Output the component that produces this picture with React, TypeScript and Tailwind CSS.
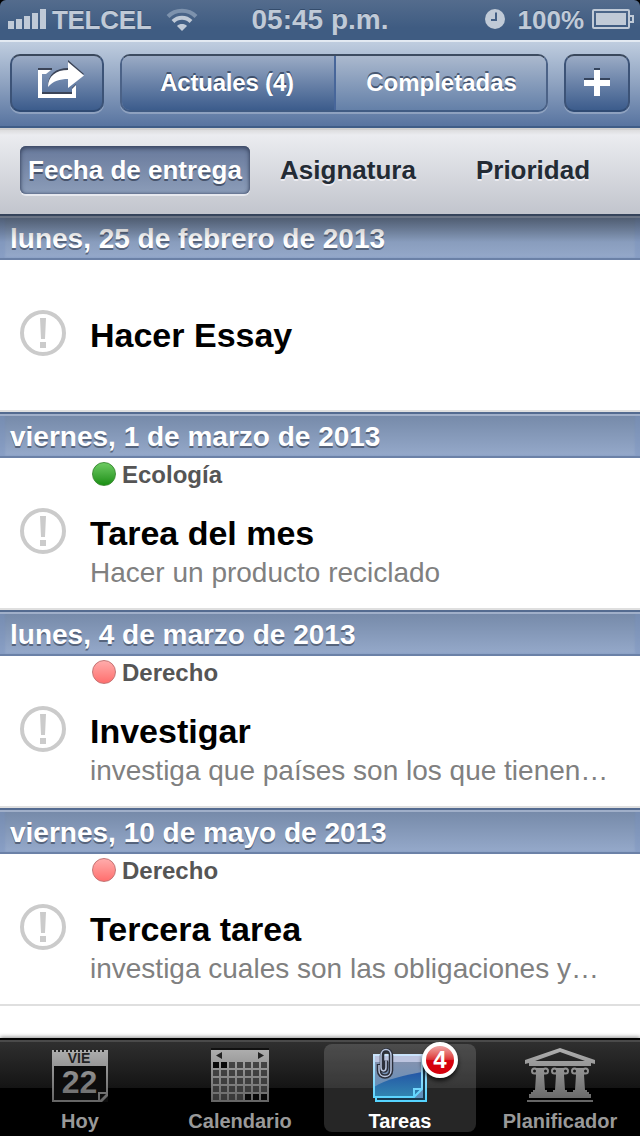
import type { ReactNode } from "react";

type Task = {
  date: string;
  title: string;
  subject?: string;
  dot?: string;
  note?: string;
};

const tasks: Task[] = [
  { date: "lunes, 25 de febrero de 2013", title: "Hacer Essay" },
  {
    date: "viernes, 1 de marzo de 2013",
    title: "Tarea del mes",
    subject: "Ecología",
    dot: "border-[#3f8f38] bg-linear-to-b from-[#6ccb62] to-[#17900f]",
    note: "Hacer un producto reciclado",
  },
  {
    date: "lunes, 4 de marzo de 2013",
    title: "Investigar",
    subject: "Derecho",
    dot: "border-[#c47575] bg-linear-to-b from-[#ffabab] to-[#ff6e6e]",
    note: "investiga que países son los que tienen…",
  },
  {
    date: "viernes, 10 de mayo de 2013",
    title: "Tercera tarea",
    subject: "Derecho",
    dot: "border-[#c47575] bg-linear-to-b from-[#ffabab] to-[#ff6e6e]",
    note: "investiga cuales son las obligaciones y…",
  },
];

function StatusBar() {
  return (
    <div className="grid h-10 grid-cols-[1fr_auto_1fr] items-center rounded-t-[6px] bg-linear-to-b from-[#546c8d] to-[#3f5c82] to-70% text-[26px] leading-10 font-bold text-[#c0cad7] [text-shadow:0_-1px_0_#344c6c]">
      <div className="flex items-center pl-2">
        <svg width="38" height="20" viewBox="0 0 38 20" fill="#c0cad7" className="mt-[-2px]">
          <path d="M0 12h6v8H0zM8 10h6v10H8zM16 7h6v13h-6zM24 4h6v16h-6zM32 0h6v20h-6z" />
        </svg>
        <span className="ml-[6px] tracking-[-0.3px]">TELCEL</span>
        <svg width="32" height="24" viewBox="0 0 32 24" fill="none" className="ml-[15px]">
          <path d="M2 8.500C9.500 .8 22.500 .8 30 8.500" stroke="#7d92ad" strokeWidth="4" />
          <path d="M7 13.500C12 8.500 20 8.500 25 13.500" stroke="#c0cad7" strokeWidth="4" />
          <path d="M16 23l-5-5c2.500-2.600 7.500-2.600 10 0z" fill="#c0cad7" />
        </svg>
      </div>
      <span className="text-[28px]">05:45 p.m.</span>
      <div className="flex items-center justify-end pr-[6px]">
        <svg width="20" height="20" viewBox="0 0 20 20" className="mt-[-2px]">
          <circle cx="10" cy="10" r="10" fill="#c0cad7" />
          <path d="M11 3.500V11H6" fill="none" stroke="#435f85" strokeWidth="2" />
        </svg>
        <span className="ml-[13px]">100%</span>
        <svg width="42" height="20" viewBox="0 0 42 20" fill="none" className="mt-[-2px] ml-[8px]">
          <rect x="1" y="1" width="36" height="18" rx="1" stroke="#c0cad7" strokeWidth="2" />
          <path d="M4 4h30v12H4z" fill="#c0cad7" />
          <path d="M38 7h3v6h-3" stroke="#c0cad7" strokeWidth="2" />
        </svg>
      </div>
    </div>
  );
}

function NavButton({ className, children }: { className: string; children: ReactNode }) {
  return (
    <button
      className={`flex h-[58px] items-center justify-center rounded-[10px] border-2 border-t-[#3a485c] border-x-[#3c5377] border-b-[#304b73] bg-linear-to-b from-[#9babc5] to-[#3c5c8c] shadow-[0_2px_0_rgba(255,255,255,0.25)] ${className}`}
    >
      {children}
    </button>
  );
}

function NavBar() {
  return (
    <div className="flex h-[88px] border-t-2 border-b-2 border-t-[#e3eaf2] border-b-[#3f5d87] bg-linear-to-b from-[#bfcddf] via-[#8ea2c0] to-[#5874a0] px-[10px] pt-[12px] text-2xl font-bold text-white">
      <NavButton className="w-[94px]">
        <svg width="50" height="42" viewBox="36 58 50 42" className="mt-[-8px] ml-[8px]">
          <path d="M38 68h14v2H38zM42 92h30v2H42zM72 88l4-4v3l-4 4z" fill="#3b4457" />
          <path d="M68 60l16 14-16 13v-9c-8 0-15 2-20 8 0-12 8-18 20-18z" fill="#3b4457" />
          <path d="M38 70h13l-5 4h-4v20h30v-5l4-4v13H38z" fill="#fff" />
          <path d="M68 62l16 13.500-16 12.500v-9c-8 0-15 2-20 8 0-11 8-17 20-17z" fill="#fff" />
        </svg>
      </NavButton>
      <div className="ml-4 flex h-[58px] w-[428px] overflow-hidden rounded-[10px] border-2 border-t-[#3d4c61] border-x-[#4b6287] border-b-[#405b83] shadow-[0_2px_0_rgba(255,255,255,0.25)] [text-shadow:0_-2px_0_rgba(40,55,80,0.7)]">
        <div className="flex w-[214px] items-center justify-center border-r-2 border-[#47669a] bg-linear-to-b from-[#9babc5] to-[#3c5c8c] pr-[2px] tracking-[-0.2px]">
          Actuales (4)
        </div>
        <div className="flex flex-1 items-center justify-center bg-linear-to-b from-[#abb9ce] to-[#6480a8] pl-px">
          Completadas
        </div>
      </div>
      <NavButton className="ml-4 w-[66px]">
        <svg width="26" height="28" viewBox="0 0 26 28" className="mt-[-3px]">
          <path d="M10 0h6v10h10v6H16v10h-6V16H0v-6h10z" fill="#35445c" />
          <path d="M10 2h6v10h10v6H16v10h-6V18H0v-6h10z" fill="#fff" />
        </svg>
      </NavButton>
    </div>
  );
}

function SortBar() {
  return (
    <div className="flex h-[86px] border-t-2 border-[#cfcfcf] bg-linear-to-b from-[#dcdcde] via-[#ebecf0] via-6% to-[#c2c5cd] px-5 pt-4 text-[26px] leading-[48px] font-bold text-[#232b35]">
      <div className="h-12 w-[230px] rounded-[6px] bg-linear-to-b from-[#68799b] to-[#8c9db9] text-center text-white shadow-[inset_0_2px_5px_#38445f,inset_0_0_3px_#4b5a78,0_2px_0_#e6e8ee] [text-shadow:0_2px_0_#46536c]">
        Fecha de entrega
      </div>
      <div className="w-[196px] text-center [text-shadow:0_2px_0_#ececf1]">Asignatura</div>
      <div className="w-[174px] text-center [text-shadow:0_2px_0_#ececf1]">Prioridad</div>
    </div>
  );
}

function TaskSection({ task, first }: { task: Task; first: boolean }) {
  return (
    <section>
      <h2 className="relative h-[46px] border-t-2 border-b-2 border-t-[#546b90] border-b-[#6b81a7] bg-linear-to-b from-[#7589a8] to-[#95a9ca] pl-[10px] text-[28px] leading-[46px] font-bold text-white shadow-[inset_0_2px_0_#a0afc9,inset_5px_0_2px_rgba(120,145,190,0.4),inset_-5px_0_2px_rgba(120,145,190,0.4)] [text-shadow:0_2px_0_#56647c]">
        {task.date}
        {first && (
          <span className="absolute inset-x-0 top-[-2px] h-[28px] bg-linear-to-b from-black/38 to-transparent" />
        )}
      </h2>
      <div className="flex h-[152px] border-b-2 border-[#dfdfdf]">
        <svg width="46" height="46" viewBox="0 0 46 46" className="mt-[50px] ml-5 shrink-0">
          <circle cx="23" cy="23" r="21" fill="none" stroke="#cbcbcb" strokeWidth="4" />
          <path d="M20 8h6l-1 21h-4zM20 32h6v6h-6z" fill="#cbcbcb" />
        </svg>
        <div className="ml-6 min-w-0">
          <div className="flex h-[33px] items-center gap-[6px] pl-[2px] text-2xl font-bold text-[#555]">
            {task.subject && (
              <>
                <span className={`mt-[-1px] size-6 rounded-full border ${task.dot}`} />
                {task.subject}
              </>
            )}
          </div>
          <h3 className="mt-[21px] text-[34px] leading-[42px] font-bold text-black">{task.title}</h3>
          <p className="text-[28px] leading-[38px] whitespace-nowrap text-[#808080]">{task.note}</p>
        </div>
      </div>
    </section>
  );
}

function TodayIcon() {
  return (
    <svg width="60" height="60" viewBox="50 1046 60 60">
      <defs>
        <linearGradient id="gray" gradientUnits="userSpaceOnUse" x1="0" y1="1048" x2="0" y2="1104">
          <stop offset="0" stopColor="#b0b0b0" />
          <stop offset="1" stopColor="#626262" />
        </linearGradient>
      </defs>
      <path d="M52 1050h56v52H52z" fill="#0c0c0c" />
      <path
        fillRule="evenodd"
        d="M52 1050h56v46l-6 6H52zM54 1066v34h44v-8h8v-26zM100 1094v6l6-6z"
        fill="url(#gray)"
      />
      <path d="M54 1051h52" stroke="#222" strokeWidth="2" strokeDasharray="2 2" />
      <text x="79" y="1063" textAnchor="middle" fontSize="14" fontWeight="700" fill="#222">VIE</text>
      <text x="79.500" y="1093" textAnchor="middle" fontSize="32" fontWeight="700" fill="url(#gray)">22</text>
    </svg>
  );
}

function CalendarIcon() {
  const cells = Array.from({ length: 35 }, (_, i) => i);
  return (
    <svg width="60" height="60" viewBox="210 1046 60 60">
      <path d="M211 1048h58v2h-58z" fill="#111" />
      <path d="M211 1050h58v52h-58z" fill="url(#gray)" />
      <path d="M222 1052v7l-6-3.500zM258 1052v7l6-3.500z" fill="#222" />
      {cells.map((i) => (
        <rect
          key={i}
          x={213 + (i % 7) * 8}
          y={1062 + Math.floor(i / 7) * 8}
          width="6"
          height="6"
          fill={i < 2 || i > 31 ? "#080808" : "#2b2b2b"}
          fillOpacity={i < 2 || i > 31 ? 1 : 0.78}
        />
      ))}
    </svg>
  );
}

function TasksIcon() {
  return (
    <svg width="60" height="60" viewBox="370 1046 60 60">
      <defs>
        <linearGradient id="note" x1="0" y1="0" x2="0" y2="1">
          <stop offset="0" stopColor="#8b93ad" />
          <stop offset="1" stopColor="#5b8ebc" />
        </linearGradient>
        <linearGradient id="noteLow" x1="0" y1="0" x2="0" y2="1">
          <stop offset="0" stopColor="#2456a5" />
          <stop offset="1" stopColor="#3287b1" />
        </linearGradient>
        <linearGradient id="noteEdge" gradientUnits="userSpaceOnUse" x1="0" y1="1048" x2="0" y2="1100">
          <stop offset="0" stopColor="#dbe5fa" />
          <stop offset="1" stopColor="#56d4ff" />
        </linearGradient>
      </defs>
      <path d="M376 1058h50v43h-50z" fill="#17374c" stroke="url(#noteEdge)" strokeWidth="2" />
      <path d="M373 1054h50v44h-50z" fill="url(#note)" />
      <path d="M374 1087c12-8 32-12 48-15v16l-8 9h-40z" fill="url(#noteLow)" />
      <path d="M374 1055h48v7h-48z" fill="#bcc4df" />
      <path d="M374 1055h48v34l-8 8h-40zM414 1097v-8h8" fill="none" stroke="url(#noteEdge)" strokeWidth="2" />
      <path
        d="M379 1064v6.500c0 8 12 8 12 0v-15c0-7-9-7-9 0v12c0 4 4 4 4 0v-7"
        fill="none"
        stroke="#2b2f3a"
        strokeWidth="4.500"
      />
      <path
        d="M379 1065v5.500c0 8 12 8 12 0v-15c0-8-10-8-10 0v12c0 4.500 5 4.500 5 0v-7"
        fill="none"
        stroke="#bcc8e2"
        strokeWidth="1.500"
      />
    </svg>
  );
}

function PlannerIcon() {
  return (
    <svg width="72" height="60" viewBox="524 1046 72 60" fill="url(#gray)">
      <path fillRule="evenodd" d="M560 1048l35 12v4l-4-1H529l-4 1v-4zM560 1052l-25 9h50z" />
      <path d="M529 1062h62v4h-62zM531 1092h58v2h-58zM529 1094h62v4h-62zM527 1100h66v2h-66z" />
      {[540, 560, 580].map((x) => (
        <g key={x}>
          <path d={`M${x - 6} 1068h12v4l-2 3 1 15h2v2H${x - 7}v-2h2l1-15-2-3z`} />
          <circle cx={x - 5.5} cy="1071" r="2.500" fill="#1b1b1b" stroke="url(#gray)" strokeWidth="2" />
          <circle cx={x + 5.5} cy="1071" r="2.500" fill="#1b1b1b" stroke="url(#gray)" strokeWidth="2" />
        </g>
      ))}
    </svg>
  );
}

function Tab({ label, active, badge, children }: { label: string; active?: boolean; badge?: number; children: ReactNode }) {
  return (
    <div
      className={`relative mx-1 mt-[4px] flex h-[88px] flex-1 flex-col items-center rounded-lg pt-[2px] text-xl leading-6 font-bold [&>svg]:shrink-0 ${
        active ? "bg-white/15 text-white" : "text-[#999]"
      }`}
    >
      {children}
      <span className="mt-[3px]">{label}</span>
      {badge && (
        <span className="absolute top-[-2px] left-[98px] flex size-9 items-center justify-center rounded-full border-4 border-white bg-linear-to-b from-[#ec9a9a] from-5% via-[#dc3036] via-48% to-[#d5000d] to-52% text-2xl text-white shadow-[0_3px_4px_rgba(0,0,0,0.7)]">
          {badge}
        </span>
      )}
    </div>
  );
}

function TabBar() {
  return (
    <div className="flex h-[98px] border-t-2 border-black bg-[linear-gradient(#303030,#141414_48px,#000_48px)] shadow-[inset_0_2px_0_#4a4a4a,0_-1px_4px_rgba(0,0,0,0.45)]">
      <Tab label="Hoy">
        <TodayIcon />
      </Tab>
      <Tab label="Calendario">
        <CalendarIcon />
      </Tab>
      <Tab label="Tareas" active badge={4}>
        <TasksIcon />
      </Tab>
      <Tab label="Planificador">
        <PlannerIcon />
      </Tab>
    </div>
  );
}

export default function App() {
  return (
    <div className="flex h-[1136px] w-[640px] flex-col overflow-hidden bg-black font-['Liberation_Sans',Arial,sans-serif]">
      <StatusBar />
      <NavBar />
      <SortBar />
      <main className="flex-1 bg-white">
        {tasks.map((t, i) => (
          <TaskSection key={t.date} task={t} first={i === 0} />
        ))}
      </main>
      <TabBar />
    </div>
  );
}
